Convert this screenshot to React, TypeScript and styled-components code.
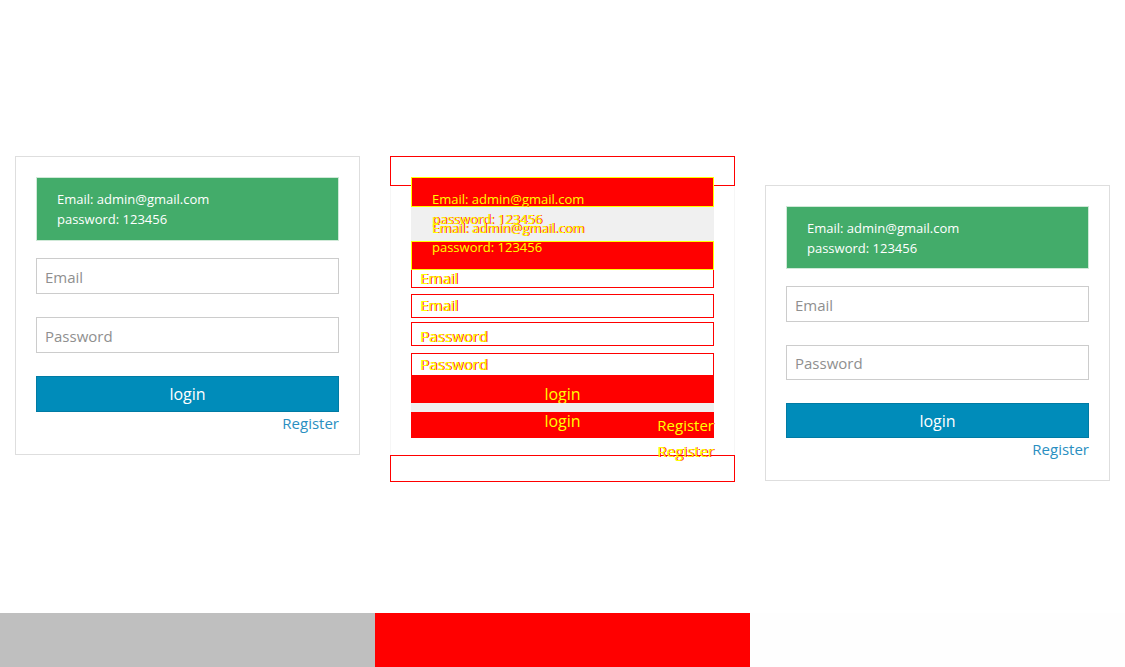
import React from "react";
import styled, { createGlobalStyle } from "styled-components";

const GlobalStyle = createGlobalStyle`
  html, body { margin: 0; padding: 0; background: #ffffff; }
  body { font-family: "Open Sans", "Liberation Sans", sans-serif; }
  * { box-sizing: border-box; }
`;

const Page = styled.div`
  width: 1125px;
  height: 667px;
  display: grid;
  grid-template-columns: repeat(3, 375px);
  grid-template-rows: 613px 54px;
  overflow: hidden;
`;

const Column = styled.div<{ $top: number }>`
  padding: ${(p) => p.$top}px 0 0 15px;
`;

/* ---------- login card ---------- */

const Card = styled.div`
  width: 345px;
  border: 1px solid #dedede;
  padding: 20px;
  display: flex;
  flex-direction: column;
`;

const Alert = styled.div<{ $h: number }>`
  height: ${(p) => p.$h}px;
  background: #43ac6a;
  border: 1px solid #cfe9d7;
  color: #ffffff;
  font-size: 13px;
  line-height: 20px;
  padding: 10px 20px;
  display: flex;
  flex-direction: column;
  justify-content: center;
`;

const Input = styled.input<{ $gap: number; $h: number }>`
  display: block;
  width: 100%;
  height: ${(p) => p.$h}px;
  margin-top: ${(p) => p.$gap}px;
  border: 1px solid #cccccc;
  padding: 1px 8px 0;
  font-family: "Open Sans", "Liberation Sans", sans-serif;
  font-size: 15px;
  color: #333;
  background: #fff;
  outline: none;
  &::placeholder { color: #8f8f8f; }
`;

const Button = styled.button<{ $gap: number; $h: number }>`
  display: block;
  width: 100%;
  height: ${(p) => p.$h}px;
  margin-top: ${(p) => p.$gap}px;
  background: #008cba;
  border: 1px solid #007ba4;
  color: #ffffff;
  font-family: "Open Sans", "Liberation Sans", sans-serif;
  font-size: 16px;
  padding: 0;
  cursor: pointer;
`;

const RegisterLink = styled.a`
  align-self: flex-end;
  font-size: 15px;
  line-height: 22px;
  color: #2a8fc1;
  text-decoration: none;
`;

type FormProps = { alertH: number; inputH: number };

const LoginCard: React.FC<FormProps> = ({ alertH, inputH }) => (
  <Card>
    <Alert $h={alertH}>
      <div>Email: admin@gmail.com</div>
      <div>password: 123456</div>
    </Alert>
    <Input $gap={17} $h={36} placeholder="Email" />
    <Input $gap={23} $h={inputH} type="password" placeholder="Password" />
    <Button $gap={23} $h={inputH}>login</Button>
    <RegisterLink href="#">Register</RegisterLink>
  </Card>
);

/* ---------- diff panel ---------- */

const DiffCard = styled.div`
  position: relative;
  width: 345px;
  height: 326px;
  border-left: 1px solid #f6f6f6;
  border-right: 1px solid #f6f6f6;
  padding: 21px 20px 0;
`;

/* highlight frames laid over the card's top and bottom edges */
const EdgeFrame = styled.div<{ $edge: "top" | "bottom"; $h: number }>`
  position: absolute;
  left: -1px;
  right: -1px;
  ${(p) => p.$edge}: 0;
  height: ${(p) => p.$h}px;
  border: 1px solid #ff0000;
`;

const DiffStack = styled.div`
  position: relative;
  display: flex;
  flex-direction: column;
`;

const DiffLine = styled.div<{ $lh?: number; $size?: number }>`
  font-size: ${(p) => p.$size ?? 13}px;
  line-height: ${(p) => p.$lh ?? 20}px;
  white-space: nowrap;
  color: #ffff00;
  text-shadow: 1px 0 0 #ff0000;
`;

const Band = styled.div<{ $h: number; $pt?: number; $tone: "red" | "gray"; $yellow?: boolean }>`
  height: ${(p) => p.$h}px;
  padding: ${(p) => p.$pt ?? 0}px 20px 0;
  background: ${(p) => (p.$tone === "red" ? "#ff0000" : "#f0f0f0")};
  border: ${(p) => (p.$yellow ? "1px solid #ffff00" : "none")};
  padding-left: ${(p) => (p.$yellow ? 20 : 21)}px;
`;

const FieldBox = styled.div<{ $h: number; $gap: number; $pt?: number; $openTop?: boolean }>`
  height: ${(p) => p.$h}px;
  margin-top: ${(p) => p.$gap}px;
  border: 1px solid #ff0000;
  border-top-width: ${(p) => (p.$openTop ? 0 : 1)}px;
  padding: ${(p) => p.$pt ?? 0}px 8px 0;
  background: #ffffff;
`;

const ButtonBand = styled.div<{ $h: number; $tone: "red" | "gray" }>`
  height: ${(p) => p.$h}px;
  background: ${(p) => (p.$tone === "red" ? "#ff0000" : "#f0f0f0")};
  display: grid;
  grid-template-areas: "cell";
`;

const BandLabel = styled(DiffLine)<{ $justify: string; $mt: number }>`
  grid-area: cell;
  justify-self: ${(p) => p.$justify};
  align-self: start;
  margin-top: ${(p) => p.$mt}px;
`;

const TrailingRegister = styled(DiffLine)`
  align-self: flex-end;
  margin-top: 3px;
`;

const DiffPanel: React.FC = () => (
  <Column $top={156}>
    <DiffCard>
      <EdgeFrame $edge="top" $h={30} />
      <EdgeFrame $edge="bottom" $h={27} />
      <DiffStack>
        <Band $h={30} $pt={11} $tone="red" $yellow>
          <DiffLine>Email: admin@gmail.com</DiffLine>
        </Band>
        <Band $h={34} $pt={7.5} $tone="gray">
          <DiffLine $lh={9}>password: 123456</DiffLine>
          <DiffLine $lh={9}>Email: admin@gmail.com</DiffLine>
        </Band>
        <Band $h={29} $pt={0.5} $tone="red" $yellow>
          <DiffLine $lh={9}>password: 123456</DiffLine>
        </Band>

        <FieldBox $h={18} $gap={0} $openTop>
          <DiffLine $size={15} $lh={16}>Email</DiffLine>
        </FieldBox>
        <FieldBox $h={24} $gap={6}>
          <DiffLine $size={15}>Email</DiffLine>
        </FieldBox>
        <FieldBox $h={24} $gap={4} $pt={3}>
          <DiffLine $size={15}>Password</DiffLine>
        </FieldBox>
        <FieldBox $h={23} $gap={7}>
          <DiffLine $size={15}>Password</DiffLine>
        </FieldBox>

        <ButtonBand $h={27} $tone="red">
          <BandLabel $size={16} $justify="center" $mt={8}>login</BandLabel>
        </ButtonBand>
        <ButtonBand $h={9} $tone="gray" />
        <ButtonBand $h={26} $tone="red">
          <BandLabel $size={16} $lh={16} $justify="center" $mt={1}>login</BandLabel>
          <BandLabel $size={15} $lh={16} $justify="end" $mt={5}>Register</BandLabel>
        </ButtonBand>
        <TrailingRegister $size={15}>Register</TrailingRegister>
      </DiffStack>
    </DiffCard>
  </Column>
);

const Bar = styled.div<{ $color: string }>`
  background: ${(p) => p.$color};
`;

export default function App() {
  return (
    <>
      <GlobalStyle />
      <Page>
        <Column $top={156}>
          <LoginCard alertH={64} inputH={36} />
        </Column>
        <DiffPanel />
        <Column $top={185}>
          <LoginCard alertH={63} inputH={35} />
        </Column>
        <Bar $color="#bfbfbf" />
        <Bar $color="#ff0000" />
        <Bar $color="#fefefe" />
      </Page>
    </>
  );
}
